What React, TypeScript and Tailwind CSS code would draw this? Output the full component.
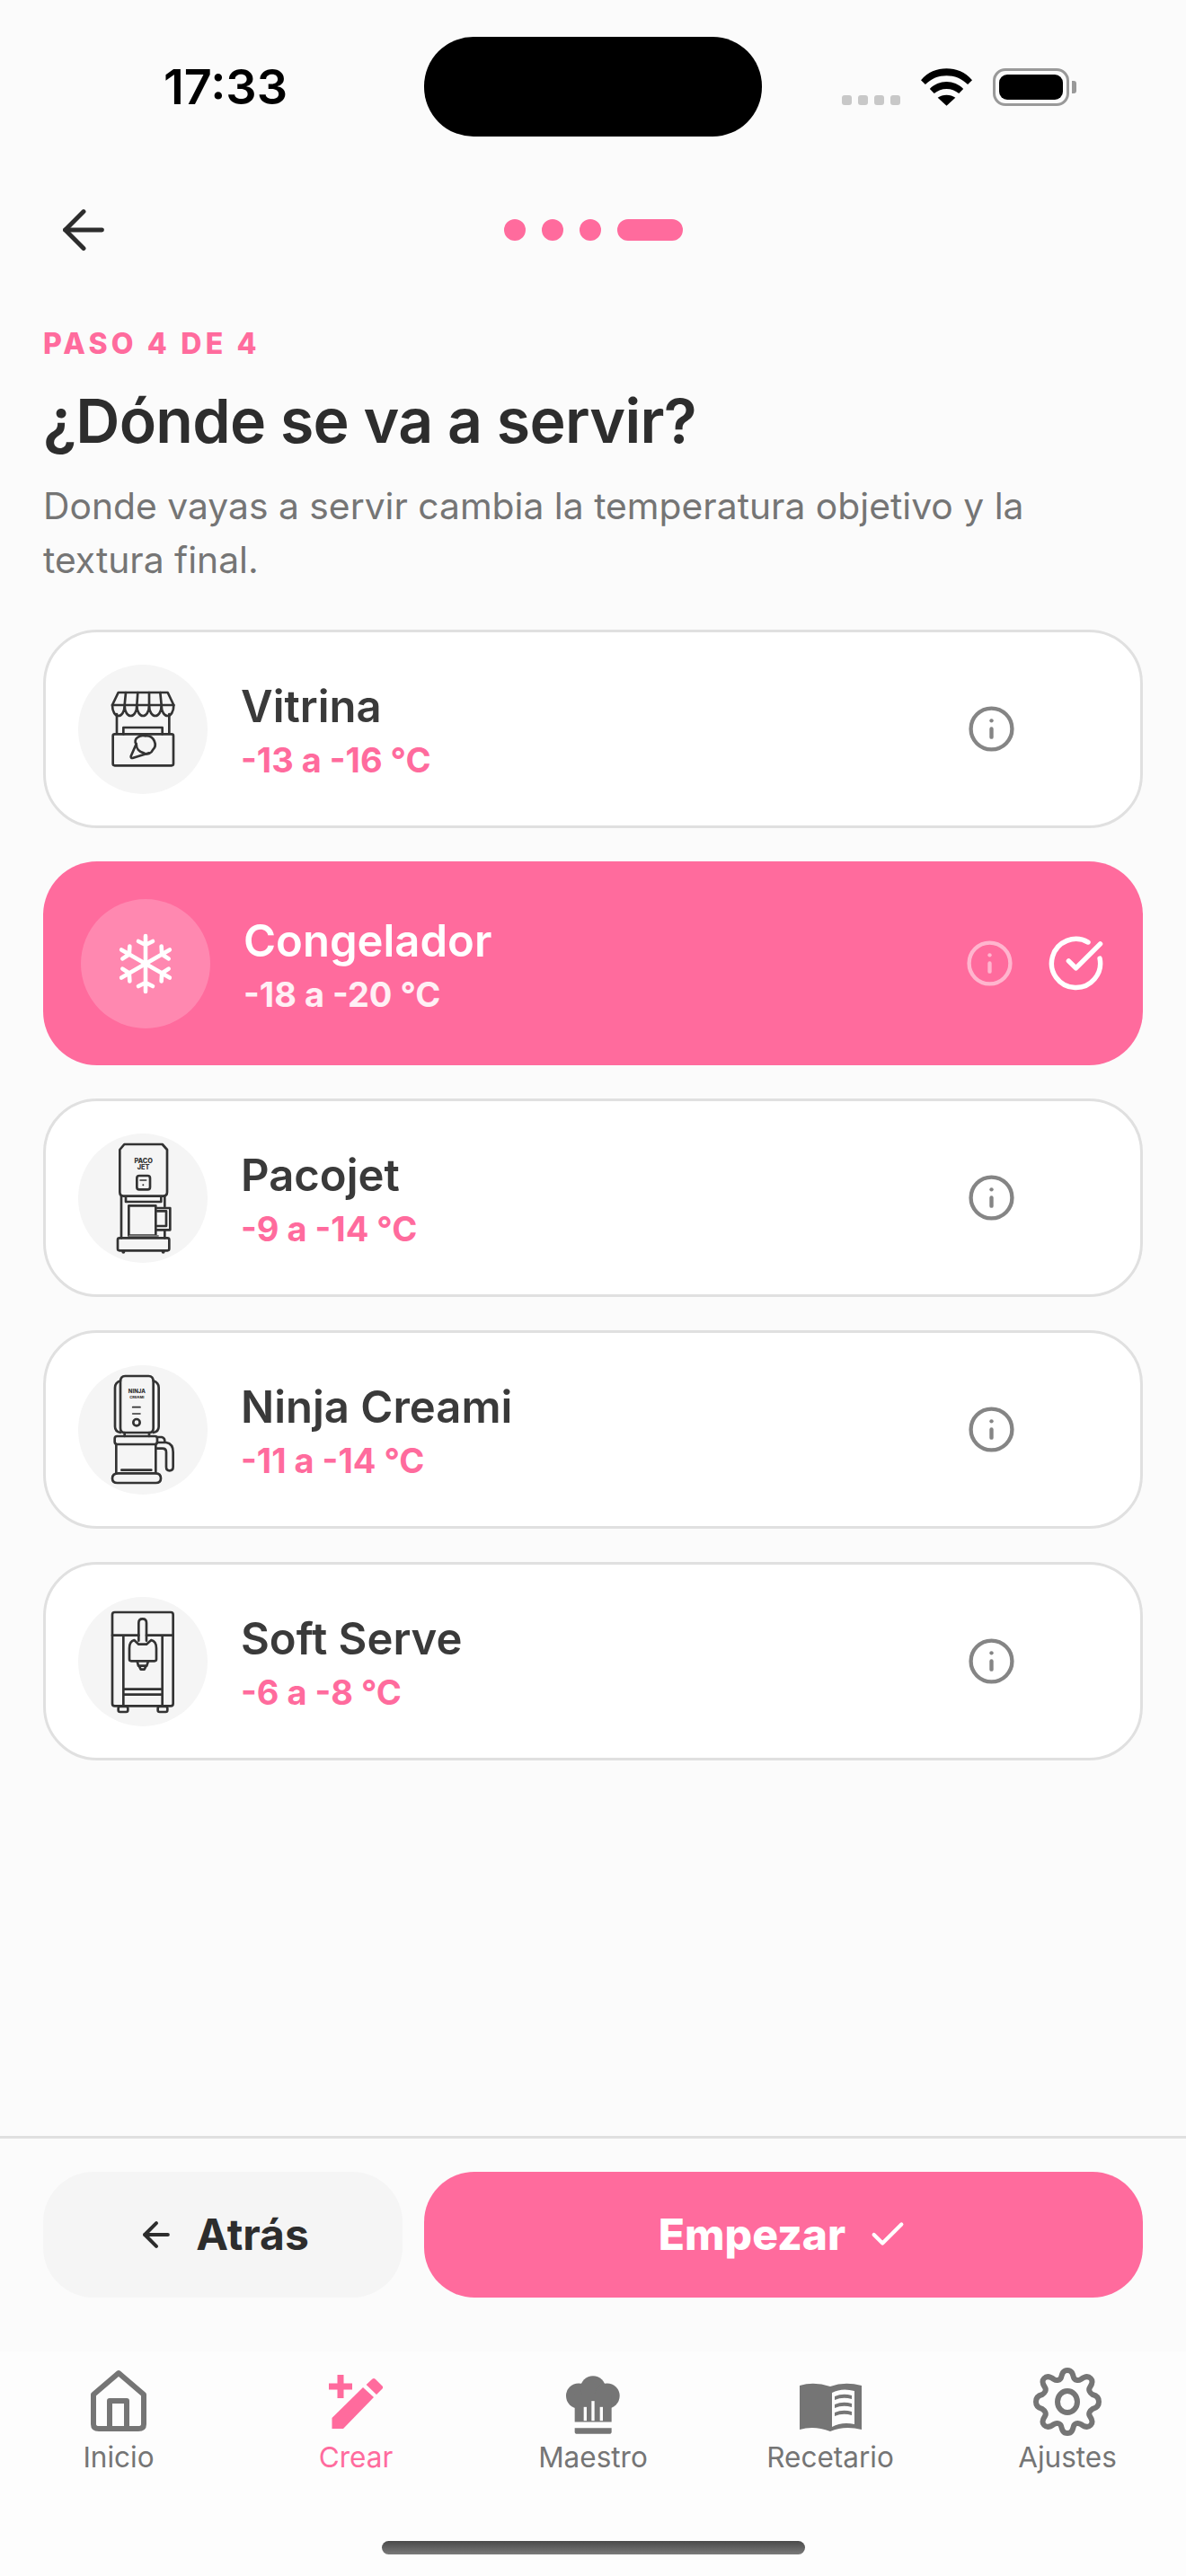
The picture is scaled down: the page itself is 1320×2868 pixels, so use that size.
import { ArrowLeft, Check, CircleCheckBig, Info } from 'lucide-react';
import React from 'react';

const StandIcon = () => (
  <svg viewBox="141 120 432 432" className="w-[144px] h-[144px]" fill="none" stroke="#333" strokeWidth="8" strokeLinejoin="round" strokeLinecap="round">
    <path d="M275 213H440L460 255H255Z" />
    <path d="M255 255c0 48 41 48 41 0c0 48 41 48 41 0c0 48 41 48 41 0c0 48 41 48 41 0c0 48 41 48 41 0" />
    <path d="M300 213L296 255M340 213L337 255M378 213L378 255M415 213L419 255" />
    <path d="M270 285V350M445 285V350" />
    <rect x="257" y="352" width="202" height="105" rx="6" />
    <path d="M292 352V330H422V352" />
    <path d="M335 385L317 426Q316 434 325 431L378 415" />
    <path d="M335 385C322 368 350 352 365 358C395 355 407 390 390 405C385 417 372 422 360 415C345 412 335 400 335 385Z" />
  </svg>
);

const PacojetIcon = () => (
  <svg viewBox="81 66 432 432" className="w-[144px] h-[144px]" fill="none" stroke="#333" strokeWidth="8" strokeLinejoin="round" strokeLinecap="round">
    <path d="M235 102H362L378 120V262Q378 275 365 275H232Q220 275 220 262V120Z" />
    <text x="299" y="165" textAnchor="middle" fontFamily="Inter, sans-serif" fontSize="22" fontWeight="800" fill="#333" stroke="none">PACO</text>
    <text x="299" y="187" textAnchor="middle" fontFamily="Inter, sans-serif" fontSize="22" fontWeight="800" fill="#333" stroke="none">JET</text>
    <rect x="277" y="207" width="44" height="46" rx="8" />
    <path d="M288 222H308" strokeWidth="5" />
    <circle cx="298" cy="238" r="3" fill="#333" stroke="none" />
    <path d="M240 277V294H358V277" />
    <path d="M225 275V415M370 275V310M370 390V415" />
    <path d="M250 307H340V407H250Z" />
    <path d="M340 315H388V388H340M345 325H375V375H345" />
    <rect x="250" y="405" width="100" height="9" fill="#777" stroke="none" />
    <rect x="213" y="415" width="172" height="42" rx="6" />
    <circle cx="232" cy="461" r="6" fill="#333" stroke="none" />
    <circle cx="365" cy="461" r="6" fill="#333" stroke="none" />
  </svg>
);

const NinjaIcon = () => (
  <svg viewBox="81 90 432 432" className="w-[144px] h-[144px]" fill="none" stroke="#333" strokeWidth="8" strokeLinejoin="round" strokeLinecap="round">
    <path d="M238 126H316Q332 126 332 145V300Q332 315 318 315H236Q222 315 222 300V145Q222 126 238 126Z" />
    <path d="M222 142Q204 148 204 165V295Q204 312 222 315M332 142Q350 148 350 165V295Q350 312 332 315" />
    <text x="277" y="183" textAnchor="middle" fontFamily="Inter, sans-serif" fontSize="18" fontWeight="800" fill="#333" stroke="none">NINJA</text>
    <text x="277" y="200" textAnchor="middle" fontFamily="Inter, sans-serif" fontSize="12" fontWeight="800" fill="#333" stroke="none">CREAMI</text>
    <path d="M263 230H288M263 252H288" strokeWidth="5" />
    <circle cx="276" cy="281" r="11" />
    <path d="M236 315V327M318 315V327" />
    <rect x="203" y="327" width="142" height="27" rx="8" />
    <path d="M208 354V450M340 354V450M226 440H325" />
    <path d="M195 468Q195 451 215 451H340Q357 451 357 468Q357 483 340 483H212Q195 483 195 468Z" />
    <path d="M345 330H360Q372 333 370 348M345 348H375Q398 352 398 380V430Q398 442 386 442Q375 442 375 430V380Q375 368 362 368H340" />
  </svg>
);

const SoftServeIcon = () => (
  <svg viewBox="81 54 432 432" className="w-[144px] h-[144px]" fill="none" stroke="#333" strokeWidth="8" strokeLinejoin="round" strokeLinecap="round">
    <rect x="195" y="105" width="203" height="313" rx="8" />
    <path d="M195 182H283M309 182H398M232 182V418M362 182V418M232 362H362M232 380H362" />
    <rect x="215" y="420" width="32" height="18" rx="6" />
    <rect x="347" y="420" width="32" height="18" rx="6" />
    <path d="M283 200V140Q283 127 296 127Q309 127 309 140V200" />
    <path d="M252 262V225Q252 202 268 198L283 212H309L325 198Q342 202 342 225V262Q342 268 336 268H258Q252 268 252 262Z" />
    <path d="M278 268L282 284H310L315 268M284 284L290 296H302L308 284" />
  </svg>
);

// one arm, repeated six times round the middle
const SnowflakeIcon = () => (
  <svg viewBox="-36 -36 72 72" className="w-[72px] h-[72px]" fill="none" stroke="#fff" strokeWidth="4.6" strokeLinecap="round" strokeLinejoin="round">
    {[0, 60, 120, 180, 240, 300].map((angle) => (
      <g key={angle} transform={`rotate(${angle})`}>
        <path d="M0 0V-31M-8 -25L0 -21L8 -25" />
      </g>
    ))}
  </svg>
);

const HomeIcon = () => (
  <svg viewBox="0 0 64 72" className="w-[64px] h-[72px]" fill="none" stroke="#757575" strokeWidth="6" strokeLinejoin="round">
    <path d="M32 4L4 28V61Q4 66 10 66H54Q60 66 60 61V28Z" />
    <path d="M22 66V35H41V66" />
  </svg>
);

const PenIcon = () => (
  <svg viewBox="0 0 60 60" className="w-[60px] h-[60px]" fill="#FF6B9D">
    <path d="M9.5 0H16.5V9.5H26V16.5H16.5V26H9.5V16.5H0V9.5H9.5Z" />
    <path d="M38 14L50 25L16 60H3.5V48Z" />
    <path d="M41.6 11L48 5Q50 3 52 5L60 13Q61 14 60 15L53 22Z" />
  </svg>
);

const ChefIcon = () => (
  <svg viewBox="63 68 180 194" className="w-[60px] h-[65px] mt-[6px]" fill="#757575">
    <circle cx="105" cy="135" r="42" />
    <circle cx="153" cy="110" r="42" />
    <circle cx="200" cy="135" r="42" />
    <rect x="92" y="130" width="123" height="92" />
    <rect x="122" y="172" width="10" height="46" fill="#fdfdfd" />
    <rect x="148" y="152" width="10" height="66" fill="#fdfdfd" />
    <rect x="176" y="172" width="10" height="46" fill="#fdfdfd" />
    <path d="M92 242H215V254Q215 262 207 262H100Q92 262 92 254Z" />
  </svg>
);

const BookIcon = () => (
  <svg viewBox="0 0 69 54" className="w-[69px] h-[54px] mt-[12px]" fill="#757575">
    <path d="M0 3Q16 -2 34 4V54Q16 47 0 52Z" />
    <path d="M34 4Q50 -2 69 3V52Q50 47 34 54ZM36 11Q47 5 61 9V46Q47 43 36 49Z" fillRule="evenodd" />
    <path d="M39 15Q48 11 58 14V18Q48 15 39 19ZM39 24Q48 20 58 23V27Q48 24 39 28ZM39 33Q48 29 58 32V36Q48 33 39 37Z" />
  </svg>
);

const GearIcon = () => (
  <svg viewBox="0 0 76 76" className="w-[76px] h-[76px]" fill="none" stroke="#757575" strokeWidth="6" strokeLinejoin="round">
    <path d="M38 3C43 3 44 7 45 11C46 14 50 15 53 13C57 10 61 9 64 12C67 15 65 19 63 22C61 25 63 28 66 30C70 31 73 33 73 38C73 43 70 45 66 46C63 48 61 51 63 54C65 57 67 61 64 64C61 67 57 66 53 63C50 61 46 62 45 65C44 69 43 73 38 73C33 73 32 69 31 65C30 62 26 61 23 63C19 66 15 67 12 64C9 61 11 57 13 54C15 51 13 48 10 46C6 45 3 43 3 38C3 33 6 31 10 30C13 28 15 25 13 22C11 19 9 15 12 12C15 9 19 10 23 13C26 15 30 14 31 11C32 7 33 3 38 3Z" />
    <ellipse cx="38" cy="38" rx="11" ry="12" />
  </svg>
);

const options = [
  { name: 'Vitrina', range: '-13 a -16 °C', icon: <StandIcon /> },
  { name: 'Congelador', range: '-18 a -20 °C', selected: true },
  { name: 'Pacojet', range: '-9 a -14 °C', icon: <PacojetIcon /> },
  { name: 'Ninja Creami', range: '-11 a -14 °C', icon: <NinjaIcon /> },
  { name: 'Soft Serve', range: '-6 a -8 °C', icon: <SoftServeIcon /> },
];

const tabs = [
  { label: 'Inicio', icon: <HomeIcon /> },
  { label: 'Crear', icon: <PenIcon />, active: true },
  { label: 'Maestro', icon: <ChefIcon /> },
  { label: 'Recetario', icon: <BookIcon /> },
  { label: 'Ajustes', icon: <GearIcon /> },
];

const App = () => {
  return (
    <div className="w-[1320px] h-[2868px] flex flex-col bg-[#fbfbfb] font-['Inter',sans-serif] overflow-hidden">
      {/* status bar */}
      <div className="h-[201px] pt-[41px] flex items-start">
        <div className="w-[472px] pl-[182px] h-[111px] flex items-center text-[54px] font-semibold text-black">17:33</div>
        <div className="w-[376px] h-[111px] rounded-[55px] bg-black" />
        <div className="pl-[89px] h-[111px] flex items-center">
          <div className="flex gap-[7px] mt-[30px] mr-[23px]">
            <div className="w-[11px] h-[11px] rounded-[3px] bg-[#c8c8c8]" />
            <div className="w-[11px] h-[11px] rounded-[3px] bg-[#c8c8c8]" />
            <div className="w-[11px] h-[11px] rounded-[3px] bg-[#c8c8c8]" />
            <div className="w-[11px] h-[11px] rounded-[3px] bg-[#c8c8c8]" />
          </div>
          <svg viewBox="0 0 58 42" className="w-[57px] h-[42px] mr-[23px]">
            <path d="M29 0C40 0 50 4 58 13L53 18C46 11 38 8 29 8C20 8 12 11 5 18L0 13C8 4 18 0 29 0Z" />
            <path d="M29 15C36 15 43 18 48 23L43 28C39 25 34 23 29 23C24 23 19 25 15 28L10 23C15 18 22 15 29 15Z" />
            <path d="M29 30C33 30 36 31 39 33L29 42L19 33C22 31 25 30 29 30Z" />
          </svg>
          <div className="w-[85px] h-[42px] rounded-[14px] border-[3px] border-[#999] p-[4px]">
            <div className="w-full h-full rounded-[9px] bg-black" />
          </div>
          <div className="w-[5px] h-[14px] rounded-r-[3px] bg-[#999] ml-[3px]" />
        </div>
      </div>

      {/* header */}
      <div className="relative h-[110px] flex items-center justify-center">
        <ArrowLeft className="absolute left-[58px] top-[20px] w-[70px] h-[70px] text-[#2d2d2d]" strokeWidth={1.7} />
        <div className="flex items-center gap-[18px]">
          <div className="w-[24px] h-[24px] rounded-full bg-[#FF6B9D]" />
          <div className="w-[24px] h-[24px] rounded-full bg-[#FF6B9D]" />
          <div className="w-[24px] h-[24px] rounded-full bg-[#FF6B9D]" />
          <div className="w-[73px] h-[24px] rounded-full bg-[#FF6B9D]" />
        </div>
      </div>

      {/* heading */}
      <div className="px-[48px] pt-[54px]">
        <p className="text-[32px] leading-[36px] font-extrabold tracking-[4.2px] text-[#FF6B9D]">PASO 4 DE 4</p>
        <h1 className="mt-[25px] text-[68px] leading-[84px] font-semibold tracking-[-0.7px] text-[#2d2d2d]">¿Dónde se va a servir?</h1>
        <p className="mt-[23px] text-[40.8px] leading-[60px] text-[#757575]">
          Donde vayas a servir cambia la temperatura objetivo y la textura final.
        </p>
      </div>

      {/* options */}
      <div className="px-[48px] mt-[48px] flex flex-col gap-[37px]">
        {options.map((option) =>
          option.selected ? (
            <div key={option.name} className="h-[227px] rounded-[60px] bg-[#FF6B9D] flex items-center pl-[42px] pr-[42px]">
              <div className="w-[144px] h-[144px] rounded-full bg-white/20 flex items-center justify-center">
                <SnowflakeIcon />
              </div>
              <div className="ml-[37px] flex-1">
                <p className="pt-[2px] text-[49px] leading-[60px] font-semibold text-white">{option.name}</p>
                <p className="mt-[7px] text-[38px] leading-[44px] font-bold text-white/90">{option.range}</p>
              </div>
              <Info className="w-[55px] h-[55px] text-white/50 mr-[36px]" strokeWidth={1.9} />
              <CircleCheckBig className="w-[65px] h-[65px] text-white" strokeWidth={2} />
            </div>
          ) : (
            <div key={option.name} className="h-[221px] rounded-[60px] border-[3px] border-[#e0e0e0] bg-white flex items-center pl-[36px] pr-[138px]">
              <div className="w-[144px] h-[144px] rounded-full bg-[#f5f5f5]">{option.icon}</div>
              <div className="ml-[37px] flex-1">
                <p className="pt-[2px] text-[49px] leading-[60px] font-semibold text-[#3a3a3a]">{option.name}</p>
                <p className="mt-[7px] text-[38px] leading-[44px] font-bold text-[#FF6B9D]">{option.range}</p>
              </div>
              <Info className="w-[55px] h-[55px] text-[#858585]" strokeWidth={1.9} />
            </div>
          ),
        )}
      </div>

      <div className="flex-1" />

      {/* footer buttons */}
      <div className="border-t-[3px] border-[#e0e0e0] px-[48px] pt-[37px] pb-[60px] flex gap-[24px]">
        <button className="w-[400px] h-[140px] rounded-[56px] bg-[#f5f5f5] flex items-center justify-center gap-[22px] text-[48px] font-bold text-[#2d2d2d]">
          <ArrowLeft className="w-[44px] h-[44px]" strokeWidth={2.2} />
          Atrás
        </button>
        <button className="flex-1 h-[140px] rounded-[56px] bg-[#FF6B9D] flex items-center justify-center gap-[24px] text-[48px] font-extrabold text-white">
          Empezar
          <Check className="w-[46px] h-[46px]" strokeWidth={2.2} />
        </button>
      </div>

      {/* tab bar */}
      <div className="h-[250px] bg-[#fdfdfd] flex flex-col">
        <div className="grid grid-cols-5 pt-[18px]">
          {tabs.map((tab) => (
            <div key={tab.label} className="flex flex-col items-center">
              <div className="h-[76px] flex items-center justify-center">{tab.icon}</div>
              <span className={tab.active ? 'text-[31.5px] leading-[36px] mt-[6px] text-[#FF6B9D]' : 'text-[31.5px] leading-[36px] mt-[6px] text-[#757575]'}>
                {tab.label}
              </span>
            </div>
          ))}
        </div>
        <div className="flex-1 flex items-end justify-center pb-[24px]">
          <div className="w-[471px] h-[15px] rounded-full bg-linear-to-b from-[#4a4a4a] to-[#7a7a7a]" />
        </div>
      </div>
    </div>
  );
};

export default App;
